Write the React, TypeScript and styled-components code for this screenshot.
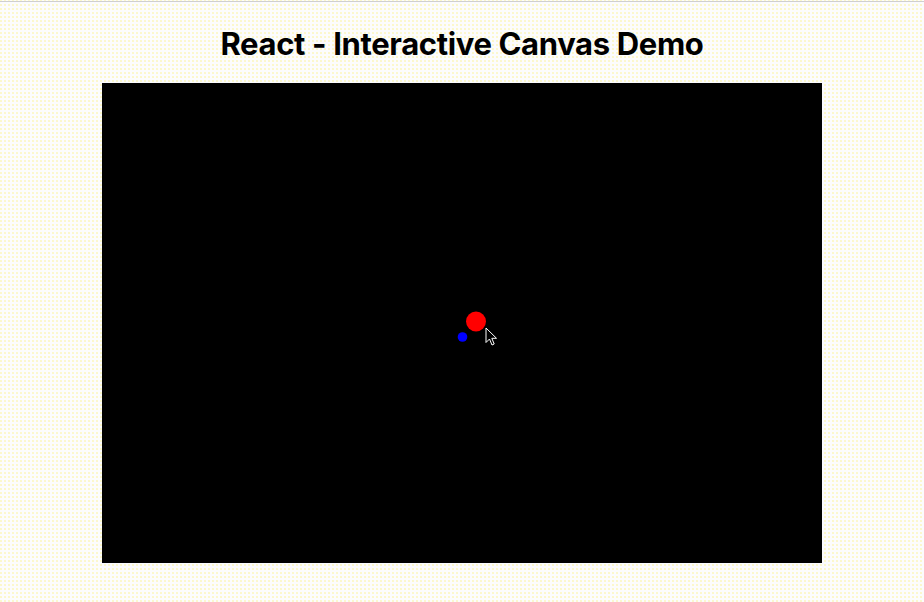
import React from "react";
import styled, { createGlobalStyle } from "styled-components";

const Global = createGlobalStyle`
  html, body { margin: 0; padding: 0; }
  body {
    background-color: #fcfcfd;
    background-image: radial-gradient(circle at 1px 1px, #fcf49a 0.5px, transparent 0.9px);
    background-size: 4px 4px;
    font-family: Inter, "Noto Sans", sans-serif;
    width: 924px;
    height: 602px;
    overflow: hidden;
  }
`;

const Page = styled.div`
  display: flex;
  flex-direction: column;
  align-items: center;
  padding-top: 1px;
`;

const TopRule = styled.div`
  align-self: stretch;
  height: 1px;
  background: #cfcfcf;
`;

const Title = styled.h1`
  margin: 22px 0 0;
  font-size: 31px;
  line-height: 40px;
  font-weight: 700;
  color: #000;
  letter-spacing: -0.35px;
`;

const Stage = styled.div`
  position: relative;
  margin-top: 19px;
  width: 720px;
  height: 480px;
  background: #000;
`;

const Drawing = styled.svg`
  display: block;
  width: 720px;
  height: 480px;
`;

const Cursor = styled.svg`
  position: absolute;
  left: 383px;
  top: 244px;
  width: 13px;
  height: 20px;
`;

export default function App() {
  return (
    <>
      <Global />
      <Page>
        <TopRule />
        <Title>React - Interactive Canvas Demo</Title>
        <Stage>
          <Drawing viewBox="0 0 720 480">
            <circle cx={374} cy={238.5} r={10} fill="#ff0000" />
            <circle cx={360.5} cy={254} r={4.8} fill="#0000ff" />
          </Drawing>
          <Cursor viewBox="0 0 13 20">
            <path
              d="M1 1 L1 15.5 L4.5 12 L7 18 L9.2 17 L6.8 11.3 L11.5 11.3 Z"
              fill="#000"
              stroke="#fff"
              strokeWidth="1"
              strokeLinejoin="miter"
            />
          </Cursor>
        </Stage>
      </Page>
    </>
  );
}
